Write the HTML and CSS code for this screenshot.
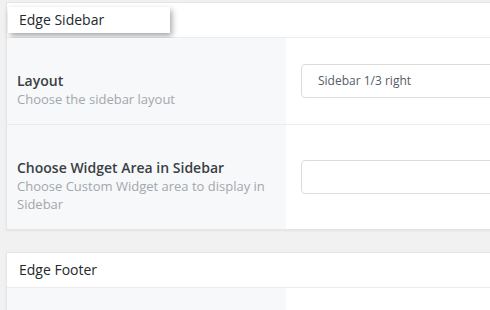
FILE: index.html
```html
<!DOCTYPE html>
<html>
<head>
<meta charset="utf-8">
<link rel="stylesheet" href="styles.css">
</head>
<body>
<div class="page">
  <section class="card">
    <div class="card-head">
      <h2 class="title title-tab">Edge Sidebar</h2>
    </div>
    <div class="row">
      <div class="label-cell">
        <div class="label">Layout</div>
        <div class="desc">Choose the sidebar layout</div>
      </div>
      <div class="field-cell">
        <div class="select">Sidebar 1/3 right</div>
      </div>
    </div>
    <div class="row">
      <div class="label-cell">
        <div class="label">Choose Widget Area in Sidebar</div>
        <div class="desc">Choose Custom Widget area to display in Sidebar</div>
      </div>
      <div class="field-cell">
        <div class="select"></div>
      </div>
    </div>
  </section>
  <section class="card">
    <div class="card-head plain">
      <h2 class="title">Edge Footer</h2>
    </div>
    <div class="row row-empty">
      <div class="label-cell"></div>
      <div class="field-cell"></div>
    </div>
  </section>
</div>
</body>
</html>
```

FILE: styles.css
```css
html, body {
  margin: 0;
  padding: 0;
  background: #f1f1f1;
  font-family: "Open Sans", "Noto Sans", sans-serif;
  overflow: hidden;
}
.page {
  padding: 2px 0 0 6px;
  width: 560px;
  display: flex;
  flex-direction: column;
  gap: 22px;
}
.card {
  background: #fff;
  border: 1px solid #e5e5e5;
  box-shadow: 0 1px 2px rgba(0,0,0,0.06);
}
.card-head {
  height: 34px;
  border-bottom: 1px solid #ececec;
  display: flex;
  align-items: flex-start;
}
.title {
  margin: 0;
  font-size: 14px;
  font-weight: 400;
  color: #23282d;
  line-height: 20px;
}
.title-tab {
  margin: 4px 0 0 1px;
  width: 162px;
  height: 26px;
  padding: 3px 0 0 11px;
  box-sizing: border-box;
  background: #fff;
  box-shadow: 2px 3px 6px rgba(0,0,0,0.35);
}
.card-head.plain {
  align-items: center;
  padding-left: 12px;
}
.row {
  display: grid;
  grid-template-columns: 279px 1fr;
  border-bottom: 1px solid #ececec;
}
.row:last-child {
  border-bottom: none;
}
.row-empty {
  height: 60px;
}
.label-cell {
  background: #f7f8fa;
  padding: 34px 10px 16px 10px;
}
.label {
  font-size: 14px;
  font-weight: 600;
  color: #3a3f44;
  line-height: 18px;
}
.desc {
  font-size: 13px;
  color: #a3a7ab;
  line-height: 18px;
}
.field-cell {
  display: flex;
  align-items: center;
  padding-left: 15px;
}
.select {
  width: 260px;
  height: 34px;
  box-sizing: border-box;
  border: 1px solid #dcdcdc;
  border-radius: 4px;
  padding-left: 16px;
  font-size: 12px;
  color: #555d66;
  line-height: 32px;
}
```
